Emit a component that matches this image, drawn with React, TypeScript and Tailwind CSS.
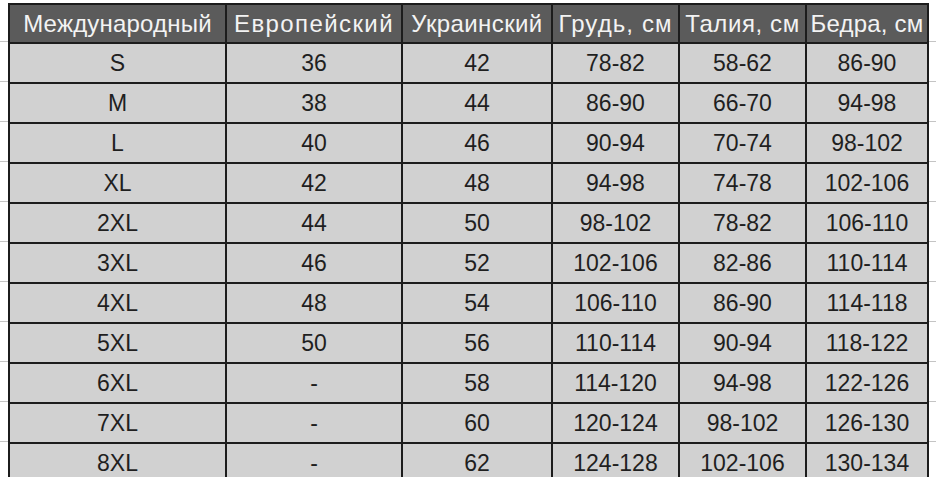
const headers = [
  { label: "Международный", cls: "tracking-[0.2px]" },
  { label: "Европейский", cls: "tracking-[1.4px]" },
  { label: "Украинский", cls: "tracking-[0.4px]" },
  { label: "Грудь, см", cls: "tracking-[1.1px]" },
  { label: "Талия, см", cls: "tracking-[0.6px]" },
  { label: "Бедра, см", cls: "tracking-[0.2px]" },
];

const rows: string[][] = [
  ["S", "36", "42", "78-82", "58-62", "86-90"],
  ["M", "38", "44", "86-90", "66-70", "94-98"],
  ["L", "40", "46", "90-94", "70-74", "98-102"],
  ["XL", "42", "48", "94-98", "74-78", "102-106"],
  ["2XL", "44", "50", "98-102", "78-82", "106-110"],
  ["3XL", "46", "52", "102-106", "82-86", "110-114"],
  ["4XL", "48", "54", "106-110", "86-90", "114-118"],
  ["5XL", "50", "56", "110-114", "90-94", "118-122"],
  ["6XL", "-", "58", "114-120", "94-98", "122-126"],
  ["7XL", "-", "60", "120-124", "98-102", "126-130"],
  ["8XL", "-", "62", "124-128", "102-106", "130-134"],
];

const widths = ["w-[217px]", "w-[176px]", "w-[150px]", "w-[127px]", "w-[127px]", "w-[122px]"];

export default function App() {
  return (
    <div className="h-[477px] w-[936px] overflow-hidden bg-white bg-[repeating-linear-gradient(to_bottom,transparent_0,transparent_39px,#c4c4c4_39px,#c4c4c4_40px)] bg-position-[0_2px] pt-[3px] pl-[8px] font-['Liberation_Sans',Arial,sans-serif]">
      <table className="table-fixed border-collapse border-2 border-[#1c1c1c]">
        <thead>
          <tr className="h-[39px] bg-[#5b5b5b] text-[#f3f3f3]">
            {headers.map((h, i) => (
              <th
                key={h.label}
                className={`${widths[i]} ${h.cls} border-2 border-[#1c1c1c] p-0 text-center text-[24px] font-normal whitespace-nowrap`}
              >
                {h.label}
              </th>
            ))}
          </tr>
        </thead>
        <tbody>
          {rows.map((r) => (
            <tr key={r[0]} className="h-[40px] bg-[#d1d1d1] text-[#1f1f1f]">
              {r.map((c, i) => (
                <td key={i} className="border-2 border-[#1c1c1c] p-0 text-center text-[23px] leading-none">
                  {c}
                </td>
              ))}
            </tr>
          ))}
        </tbody>
      </table>
    </div>
  );
}
